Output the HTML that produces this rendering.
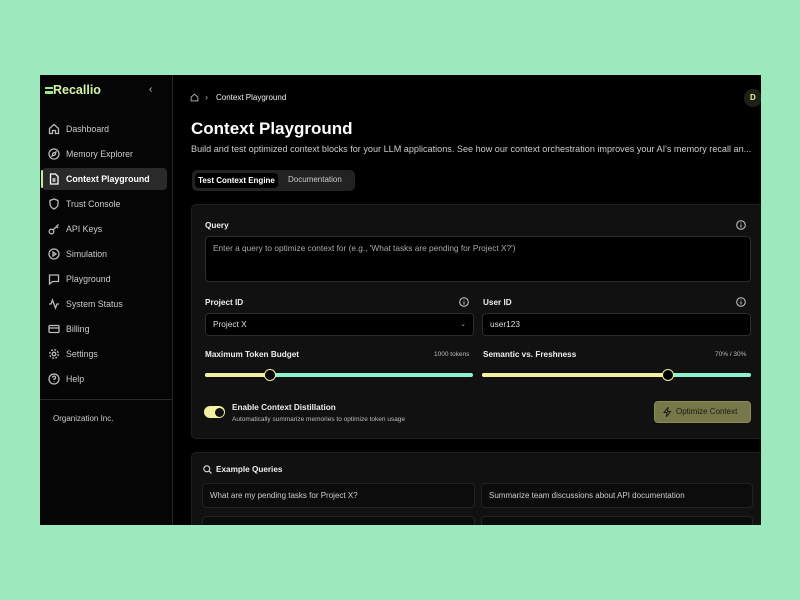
<!DOCTYPE html>
<html><head><style>
*{box-sizing:border-box;margin:0;padding:0}
body{width:800px;height:600px;background:#9de8bd;font-family:"Liberation Sans",sans-serif;position:relative;overflow:hidden}
#win{position:absolute;left:40px;top:75px;width:721px;height:450px;background:#000;overflow:hidden;color:#eee}
#side{position:absolute;left:0;top:0;width:133px;height:450px;border-right:1px solid #262626;background:#050505}
.logo{position:absolute;left:5px;top:8px;font-weight:bold;font-size:12.5px;color:#d6f5a8}
.logo i{display:inline-block;width:8px;height:7px;border-top:2px solid #9be88a;border-bottom:2px solid #9be88a;vertical-align:0px;position:relative}
.logo i:after{content:"";position:absolute;left:0;top:1.5px;width:8px;height:1.5px;background:#9be88a}
.chev{position:absolute;left:109px;top:9px;font-size:10px;color:#ccc}
.nav{position:absolute;left:2px;width:125px;height:22px;font-size:8.8px;color:#ccc;line-height:22px;padding-left:24px;border-radius:4px}
.nav svg{position:absolute;left:6px;top:5px;width:12px;height:12px;fill:none;stroke:#bbb;stroke-width:1.3}
.nav.act{background:#2a2a2a;color:#fff;font-weight:bold}
.nav.act:before{content:"";position:absolute;left:-1px;top:2px;width:2px;height:18px;background:#b6f29a;border-radius:1px}
.div{position:absolute;left:0;top:324px;width:133px;height:1px;background:#2a2a2a}
.org{position:absolute;left:13px;top:339px;font-size:8px;color:#ccc}
.abs{position:absolute}
.card{position:absolute;background:#111;border:1px solid #1f1f1f;border-radius:5px}
.lbl{position:absolute;font-size:8.2px;color:#eee;font-weight:bold}
.inp{position:absolute;background:#000;border:1px solid #2c2c2c;border-radius:4px;font-size:8.3px;color:#ddd;padding-left:7px}
.info{position:absolute;width:10px;height:10px}
.track{position:absolute;height:4px;border-radius:2px;background:#8ef2cc}
.track b{position:absolute;left:0;top:0;height:4px;border-radius:2px;background:#f3f0a0}
.thumb{position:absolute;top:-4px;width:12px;height:12px;border-radius:50%;background:#000;border:1.5px solid #f3f0a0}
.ex{position:absolute;height:25px;border:1px solid #222;border-radius:4px;background:#0c0c0c;font-size:8px;color:#ccc;line-height:23px;padding-left:7px}
</style></head><body>
<div id="win">
<div id="side">
<div class="logo"><i></i>Recallio</div>
<div class="chev">‹</div>
<div class="nav" style="top:43px"><svg viewBox="0 0 12 12"><path d="M1.5 5.5L6 1.5l4.5 4V10.5h-3v-3h-3v3h-3z"/></svg>Dashboard</div>
<div class="nav" style="top:68px"><svg viewBox="0 0 12 12"><circle cx="6" cy="6" r="5"/><path d="M8 4L5 5 4 8 7 7z"/></svg>Memory Explorer</div>
<div class="nav act" style="top:93px"><svg viewBox="0 0 12 12" style="stroke:#fff"><path d="M2.5 1h5l2.5 2.5V11h-7.5z M4.5 6h3M4.5 8h3"/></svg>Context Playground</div>
<div class="nav" style="top:118px"><svg viewBox="0 0 12 12"><path d="M6 1l4 1.5V6c0 2.5-2 4-4 5-2-1-4-2.5-4-5V2.5z"/></svg>Trust Console</div>
<div class="nav" style="top:143px"><svg viewBox="0 0 12 12"><circle cx="3.5" cy="8.5" r="2.3"/><path d="M5.2 6.8L10.5 1.5M8.5 3.5l1.5 1.5"/></svg>API Keys</div>
<div class="nav" style="top:168px"><svg viewBox="0 0 12 12"><circle cx="6" cy="6" r="5"/><path d="M5 4v4l3-2z"/></svg>Simulation</div>
<div class="nav" style="top:193px"><svg viewBox="0 0 12 12"><path d="M1.5 2h9v6.5h-6l-3 2.5z"/></svg>Playground</div>
<div class="nav" style="top:218px"><svg viewBox="0 0 12 12"><path d="M1 6h2l1.5-4 3 8 1.5-4h2"/></svg>System Status</div>
<div class="nav" style="top:243px"><svg viewBox="0 0 12 12"><rect x="1" y="2.5" width="10" height="7" rx="1"/><path d="M1 5h10"/></svg>Billing</div>
<div class="nav" style="top:268px"><svg viewBox="0 0 12 12"><circle cx="6" cy="6" r="1.8"/><circle cx="6" cy="6" r="4.3" stroke-dasharray="2 1.4"/></svg>Settings</div>
<div class="nav" style="top:293px"><svg viewBox="0 0 12 12"><circle cx="6" cy="6" r="5"/><path d="M4.5 4.5a1.5 1.5 0 1 1 1.5 1.6V7M6 8.5v.6"/></svg>Help</div>
<div class="div"></div>
<div class="org">Organization Inc.</div>
</div>

<svg class="abs" style="left:150px;top:18px" width="9" height="9" viewBox="0 0 12 12" fill="none" stroke="#aaa" stroke-width="1.3"><path d="M1.5 5.5L6 1.5l4.5 4V10.5h-9z"/></svg>
<div class="abs" style="left:165px;top:17px;font-size:9px;color:#aaa">›</div>
<div class="abs" style="left:176px;top:18px;font-size:8px;color:#eee">Context Playground</div>
<div class="abs" style="left:704px;top:14px;width:18px;height:18px;border-radius:50%;background:#1d2216;color:#e9f0a8;font-size:8px;font-weight:bold;line-height:18px;padding-left:6px">D</div>

<div class="abs" style="left:151px;top:44px;font-size:17px;font-weight:bold;color:#fff">Context Playground</div>
<div class="abs" style="left:151px;top:69px;font-size:9.1px;color:#ccc;white-space:nowrap">Build and test optimized context blocks for your LLM applications. See how our context orchestration improves your AI's memory recall an...</div>
<div class="abs" style="left:152px;top:95px;width:163px;height:21px;background:#222;border-radius:5px"></div>
<div class="abs" style="left:155px;top:98px;width:83px;height:15px;background:#000;border-radius:4px;font-size:8px;font-weight:bold;color:#fff;line-height:15px;text-align:center">Test Context Engine</div>
<div class="abs" style="left:248px;top:100px;font-size:8px;color:#ccc">Documentation</div>

<div class="card" style="left:151px;top:129px;width:590px;height:235px"></div>
<div class="lbl" style="left:165px;top:146px">Query</div>
<svg class="info" style="left:696px;top:145px" viewBox="0 0 10 10" fill="none" stroke="#ccc" stroke-width="1"><circle cx="5" cy="5" r="4.3"/><path d="M5 4.5v3M5 2.6v.8"/></svg>
<div class="inp" style="left:165px;top:161px;width:546px;height:46px;padding-top:6px;color:#aaa">Enter a query to optimize context for (e.g., 'What tasks are pending for Project X?')</div>
<div class="lbl" style="left:165px;top:223px">Project ID</div>
<svg class="info" style="left:419px;top:222px" viewBox="0 0 10 10" fill="none" stroke="#ccc" stroke-width="1"><circle cx="5" cy="5" r="4.3"/><path d="M5 4.5v3M5 2.6v.8"/></svg>
<div class="lbl" style="left:443px;top:223px">User ID</div>
<svg class="info" style="left:696px;top:222px" viewBox="0 0 10 10" fill="none" stroke="#ccc" stroke-width="1"><circle cx="5" cy="5" r="4.3"/><path d="M5 4.5v3M5 2.6v.8"/></svg>
<div class="inp" style="left:165px;top:238px;width:269px;height:23px;line-height:21px">Project X<span style="position:absolute;right:7px;color:#aaa;font-size:7px">⌄</span></div>
<div class="inp" style="left:442px;top:238px;width:269px;height:23px;line-height:21px">user123</div>
<div class="lbl" style="left:165px;top:275px">Maximum Token Budget</div>
<div class="abs" style="left:394px;top:276px;font-size:6.5px;color:#bbb">1000 tokens</div>
<div class="lbl" style="left:443px;top:275px">Semantic vs. Freshness</div>
<div class="abs" style="left:675px;top:276px;font-size:6.5px;color:#bbb">70% / 30%</div>
<div class="track" style="left:165px;top:298px;width:268px"><b style="width:65px"></b><div class="thumb" style="left:59px"></div></div>
<div class="track" style="left:442px;top:298px;width:269px"><b style="width:186px"></b><div class="thumb" style="left:180px"></div></div>
<div class="abs" style="left:164px;top:331px;width:21px;height:12px;border-radius:6px;background:#f3f0a0"><div style="position:absolute;right:1.5px;top:1.5px;width:9px;height:9px;border-radius:50%;background:#111"></div></div>
<div class="lbl" style="left:192px;top:328px">Enable Context Distillation</div>
<div class="abs" style="left:192px;top:341px;font-size:6.5px;color:#bbb">Automatically summarize memories to optimize token usage</div>
<div class="abs" style="left:614px;top:326px;width:97px;height:22px;background:#77784a;border:1px solid #8a8c58;border-radius:4px;font-size:8px;color:#1a1a10;line-height:20px;padding-left:21px">Optimize Context<svg style="position:absolute;left:8px;top:5px" width="9" height="10" viewBox="0 0 9 10" fill="none" stroke="#1a1a10" stroke-width="1"><path d="M5 0.5L1 5.5h3l-0.5 4 4-5h-3z"/></svg></div>

<div class="card" style="left:151px;top:377px;width:590px;height:100px"></div>
<svg class="abs" style="left:163px;top:390px" width="9" height="9" viewBox="0 0 9 9" fill="none" stroke="#ddd" stroke-width="1.1"><circle cx="3.8" cy="3.8" r="3"/><path d="M6 6l2.5 2.5"/></svg>
<div class="lbl" style="left:176px;top:390px">Example Queries</div>
<div class="ex" style="left:162px;top:408px;width:273px">What are my pending tasks for Project X?</div>
<div class="ex" style="left:441px;top:408px;width:272px">Summarize team discussions about API documentation</div>
<div class="ex" style="left:162px;top:441px;width:273px"></div>
<div class="ex" style="left:441px;top:441px;width:272px"></div>
</div>
</body></html>
